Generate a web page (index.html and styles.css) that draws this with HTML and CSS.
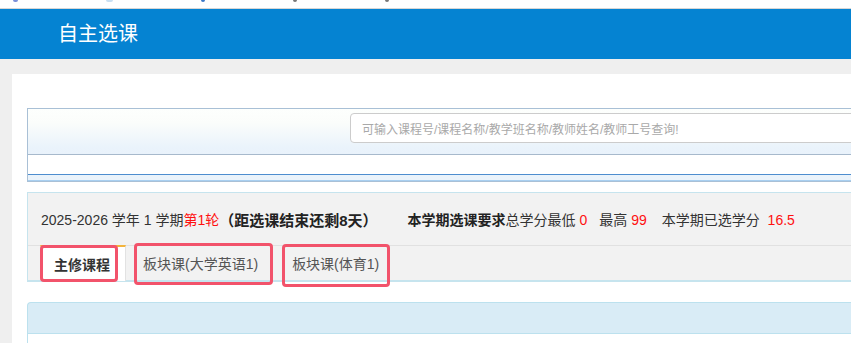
FILE: index.html
```html
<!DOCTYPE html>
<html lang="zh-CN">
<head>
<meta charset="utf-8">
<title>自主选课</title>
<link rel="stylesheet" href="styles.css">
</head>
<body>
<div class="topstrip">
  <span class="dot d1"></span><span class="dot d2"></span><span class="dot d3"></span><span class="dot d4"></span><span class="dot d5"></span>
</div>
<header class="header"><h1 class="title">自主选课</h1></header>
<main class="main">
  <div class="card">
    <div class="search">
      <div class="search-top">
        <div class="search-input">可输入课程号/课程名称/教学班名称/教师姓名/教师工号查询!</div>
      </div>
      <div class="search-mid"></div>
      <div class="search-bot"></div>
    </div>

    <div class="info-panel">
      <div class="info">
        <span>2025-2026 学年 1 学期</span><span class="red">第1轮</span><span class="big">（距选课结束还剩8天）</span>
        <span class="req"><b>本学期选课要求</b>总学分最低 <span class="red">0</span></span>
        <span class="max">最高 <span class="red">99</span></span>
        <span class="sel">本学期已选学分 <span class="red num">16.5</span></span>
      </div>
      <div class="tabs">
        <div class="tab active">主修课程<span class="mark m1"></span></div>
        <div class="tab">板块课(大学英语1)<span class="mark m2"></span></div>
        <div class="tab">板块课(体育1)<span class="mark m3"></span></div>
      </div>
    </div>

    <div class="list-panel">
      <div class="list-head"></div>
      <div class="list-body"></div>
    </div>
  </div>
</main>
</body>
</html>
```

FILE: styles.css
```css
html, body {
  margin: 0;
  padding: 0;
  overflow: hidden;
  background: #efefef;
  font-family: "Liberation Sans", "Noto Sans CJK SC", sans-serif;
  color: #333;
}

.topstrip {
  height: 8px;
  background: #fff;
  border-bottom: 1px solid #d6d6d6;
  display: flex;
  align-items: flex-start;
  padding-left: 13px;
  gap: 88px;
}
.dot {
  width: 5px;
  height: 2px;
  border-radius: 0 0 3px 3px;
  background: #7a8fd8;
}
.d2 { background: #c9dff2; width: 7px; }
.d3 { background: #3a78c8; width: 4px; }
.d4 { background: #777; width: 4px; }
.d5 { background: #777; width: 4px; }

.header {
  height: 50px;
  background: #0583d2;
  display: flex;
  align-items: center;
  padding-left: 58px;
}
.title {
  margin: 0;
  font-size: 20px;
  font-weight: normal;
  color: #fff;
  line-height: 1;
}

.main {
  padding: 15px 0 0 12px;
}
.card {
  width: 1000px;
  height: 400px;
  background: #fff;
  padding: 34px 0 0 15px;
}

.search {
  border: 1px solid #a9c0d6;
  border-right: none;
}
.search-top {
  height: 46px;
  background: linear-gradient(#fdfffd 0%, #fbfdfb 30%, #eaf3fb 85%, #e9f2fb 100%);
  border-bottom: 1px solid #a7b9cc;
  padding: 4px 0 0 322px;
  box-sizing: border-box;
}
.search-input {
  width: 600px;
  height: 30px;
  box-sizing: border-box;
  border: 1px solid #cccccc;
  border-radius: 4px;
  background: #fff;
  font-size: 12px;
  color: #a9a9a9;
  padding-left: 11px;
  display: flex;
  align-items: center;
}
.search-mid {
  height: 19px;
  background: #fff;
  border-bottom: 1px solid #4d8dcf;
}
.search-bot {
  height: 5px;
  background: #eaf3fb;
  border-bottom: 1px solid #a8cff0;
}

.info-panel {
  margin-top: 10px;
  background: #f2f2f2;
  border: 1px solid #c6e4ee;
  border-bottom: 2px solid #c6e4ee;
  border-right: none;
}
.info {
  height: 52px;
  display: flex;
  align-items: center;
  padding-left: 13px;
  font-size: 14px;
  color: #333;
  border-bottom: 1px solid #e1e1e1;
  white-space: pre;
}
.red { color: #ff1010; }
.big { font-size: 15px; font-weight: bold; color: #222; }
.req { margin-left: 30px; }
.req b { font-weight: bold; color: #222; }
.max { margin-left: 12px; }
.sel { margin-left: 15px; }
.num { margin-left: 4px; }

.tabs {
  display: flex;
  height: 34px;
  padding-left: 12px;
}
.tab {
  position: relative;
  height: 34px;
  box-sizing: border-box;
  padding: 0 15px 0 14px;
  margin-right: 5px;
  display: flex;
  align-items: center;
  font-size: 14px;
  color: #555;
  white-space: nowrap;
}
.tab.active {
  background: #fff;
  color: #333;
  font-weight: bold;
  border-top: 2px solid #f3b43c;
  border-left: 1px solid #e2e2e2;
  border-right: 1px solid #e2e2e2;
  padding: 0 15px 0 13px;
  margin-top: -1px;
  margin-right: 3px;
  height: 36px;
}

.mark {
  position: absolute;
  border: 3px solid #f2536b;
  border-radius: 4px;
  box-sizing: border-box;
}
.m1 { left: -1px; top: -2px; width: 78px; height: 37px; }
.m2 { left: 5px; top: -3px; width: 139px; height: 42px; }
.m3 { left: 4px; top: -2px; width: 108px; height: 43px; }

.list-panel {
  margin-top: 20px;
}
.list-head {
  height: 30px;
  background: #d9ecf6;
  border: 1px solid #bce1ee;
  border-right: none;
  border-radius: 4px 0 0 0;
}
.list-body {
  height: 60px;
  border-left: 1px solid #bce1ee;
}
```
